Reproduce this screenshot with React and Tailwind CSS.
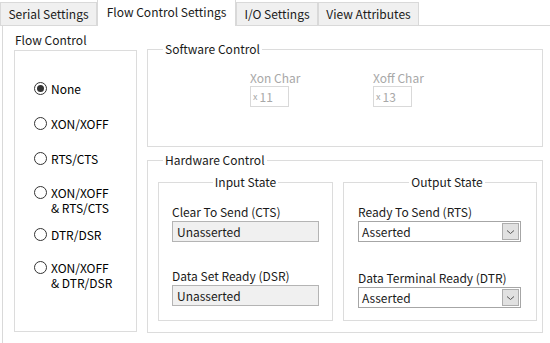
const tabs = [
  { label: 'Serial Settings', w: 'w-[97px]' },
  { label: 'Flow Control Settings', w: 'w-[139px]', active: true },
  { label: 'I/O Settings', w: 'w-[82px]' },
  { label: 'View Attributes', w: 'w-[101px]' },
];

// top margin of each option, taken from the screenshot
const options = [
  { text: 'None', checked: true, mt: 'mt-[30px]' },
  { text: 'XON/XOFF', mt: 'mt-[20px]' },
  { text: 'RTS/CTS', mt: 'mt-[20px]' },
  { text: 'XON/XOFF\n& RTS/CTS', mt: 'mt-[19px]' },
  { text: 'DTR/DSR', mt: 'mt-[12px]' },
  { text: 'XON/XOFF\n& DTR/DSR', mt: 'mt-[18px]' },
];

const Radio = ({ text, checked, mt }) => (
  <div className={`flex items-start gap-[4px] pl-[19px] ${mt}`}>
    <div className="mt-[1px] flex h-[13px] w-[13px] shrink-0 items-center justify-center rounded-full border border-[#333]">
      {checked && <div className="h-[7px] w-[7px] rounded-full bg-[#333]" />}
    </div>
    <div className="whitespace-pre-line leading-[15px] text-black">{text}</div>
  </div>
);

const CharBox = ({ label, value }) => (
  <div className="flex w-[123px] flex-col">
    <div className="leading-[16px] text-[#a8a8a8]">{label}</div>
    <div className="flex h-[21px] w-[39px] items-center border border-[#d9d9d9] pl-[2px] text-[#a8a8a8]">
      <span className="text-[9px]">x</span>
      <span className="ml-[2px]">{value}</span>
    </div>
  </div>
);

const ReadField = ({ label, value, mt }) => (
  <div className={mt}>
    <div className="leading-[16px]">{label}</div>
    <div className="mt-[1px] flex h-[21px] items-center border border-[#b4b4b4] bg-[#f0f0f0] pl-[4px]">
      {value}
    </div>
  </div>
);

const Chevron = () => (
  <svg width="9" height="6" viewBox="0 0 9 6" fill="none">
    <path d="M1 1.5 L4.5 4.5 L8 1.5" stroke="#555" strokeWidth="1" />
  </svg>
);

const SelectField = ({ label, value, mt }) => (
  <div className={mt}>
    <div className="leading-[16px]">{label}</div>
    <div className="mt-[1px] flex h-[21px] w-[163px] items-center justify-between border border-[#a6a6a6] bg-white pl-[3px] pr-[1px]">
      <span>{value}</span>
      <div className="flex h-[17px] w-[17px] items-center justify-center border border-[#adadad] bg-[#e1e1e1]">
        <Chevron />
      </div>
    </div>
  </div>
);

export default function App() {
  return (
    <div className="h-[343px] w-[550px] overflow-hidden bg-white font-['Noto_Sans_CJK_KR','Noto_Sans',sans-serif] text-[12px] text-[#1a1a1a]">
      <div className="flex h-[26px] items-end border-b border-[#d9d9d9]">
        {tabs.map((t) =>
          t.active ? (
            <div
              key={t.label}
              className={`${t.w} relative z-10 -mb-px flex h-[27px] items-center justify-center border border-b-0 border-[#d9d9d9] bg-white pb-[2px] leading-[16px]`}
            >
              {t.label}
            </div>
          ) : (
            <div
              key={t.label}
              className={`${t.w} flex h-[23px] items-center justify-center border border-b-0 border-[#d9d9d9] bg-[#f0f0f0] leading-[16px]`}
            >
              {t.label}
            </div>
          )
        )}
      </div>

      <div className="ml-[2px] flex h-[317px] border-l border-[#d9d9d9]">
        {/* Flow control column */}
        <div className="flex w-[134px] flex-col pl-[11px] pt-[6px]">
          <div className="pl-[1px] leading-[16px]">Flow Control</div>
          <div className="mt-[2px] h-[282px] w-[123px] border border-[#dcdcdc]">
            {options.map((o, i) => (
              <Radio key={i} {...o} />
            ))}
          </div>
        </div>

        {/* Software / hardware column */}
        <div className="ml-[10px] flex w-[396px] flex-col pt-[15px]">
          <fieldset className="h-[106px] border border-[#dcdcdc]">
            <legend className="ml-[15px] px-[2px] leading-[16px]">Software Control</legend>
            <div className="flex pl-[102px] pt-[13px]">
              <CharBox label="Xon Char" value="11" />
              <CharBox label="Xoff Char" value="13" />
            </div>
          </fieldset>

          <fieldset className="mt-[5px] h-[181px] border border-[#dcdcdc]">
            <legend className="ml-[15px] px-[2px] leading-[16px]">Hardware Control</legend>
            <div className="mt-[6px] flex gap-[10px] pl-[10px]">
              <fieldset className="h-[147px] w-[175px] border border-[#dcdcdc] px-[13px]">
                <legend className="mx-auto px-[2px] leading-[16px]">Input State</legend>
                <ReadField label="Clear To Send (CTS)" value="Unasserted" mt="mt-[14px]" />
                <ReadField label="Data Set Ready (DSR)" value="Unasserted" mt="mt-[26px]" />
              </fieldset>
              <fieldset className="h-[147px] w-[194px] border border-[#dcdcdc] pl-[14px]">
                <legend className="mx-auto px-[2px] leading-[16px]">Output State</legend>
                <SelectField label="Ready To Send (RTS)" value="Asserted" mt="mt-[14px]" />
                <SelectField label="Data Terminal Ready (DTR)" value="Asserted" mt="mt-[28px]" />
              </fieldset>
            </div>
          </fieldset>
        </div>
      </div>
    </div>
  );
}
